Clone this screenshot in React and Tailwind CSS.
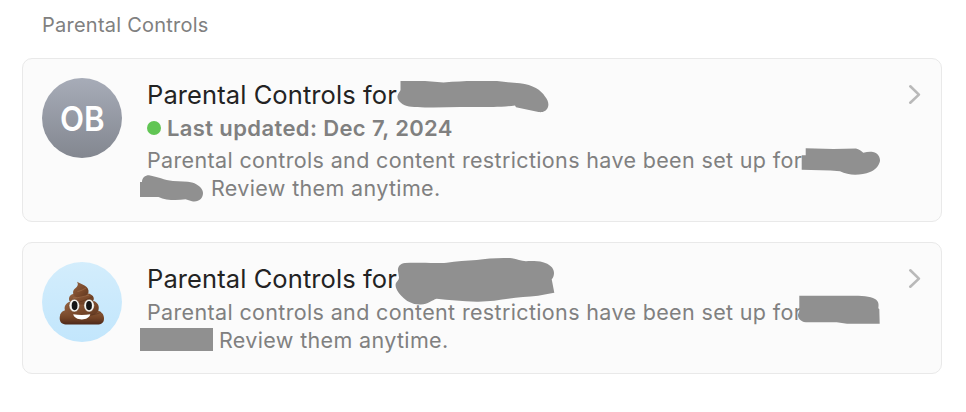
import React from "react";

function Chevron() {
  return (
    <svg className="absolute right-[20px] top-[25px] h-[20px] w-[13px]" viewBox="0 0 13 20" fill="none" stroke="#b9b9b9" strokeWidth="2.6" strokeLinecap="round" strokeLinejoin="round">
      <path d="M2.300 2.300 10.900 10.600 2.300 18.700" />
    </svg>
  );
}

function Poop() {
  return (
    <svg className="h-[44px] w-[46px]" viewBox="0 0 46 44">
      <defs>
        <linearGradient id="base" x1="0" y1="0" x2="0" y2="1">
          <stop offset="0" stopColor="#8a5a3a" />
          <stop offset="0.55" stopColor="#744426" />
          <stop offset="1" stopColor="#4d2819" />
        </linearGradient>
        <linearGradient id="tier" x1="0" y1="0" x2="1" y2="1">
          <stop offset="0" stopColor="#946342" />
          <stop offset="0.6" stopColor="#79482a" />
          <stop offset="1" stopColor="#5c3620" />
        </linearGradient>
      </defs>
      <path d="M7 29C2 30 .7 33.500.7 37.500.7 42 4 43.500 8 43.500H38C42.500 43.500 45 41.500 45 37.500 45 33 42 30 37 29Z" fill="url(#base)" />
      <path d="M10 21C6 23 5 26 6 29.500 7 34 13 35.500 22 35.500S38 34 39.500 29C40.500 25 39 22 35 20Z" fill="url(#tier)" />
      <path d="M14 13C10 14 9 18 11 21 14 25 31 24 34 20 36 17 34 14 30 12.500Z" fill="url(#tier)" />
      <path d="M18 .8C20 4 18 6 15.500 8 13 10.500 14 14.500 17 16 21 18 28 15.500 29.500 11.500 30.500 5 23 4 18 .8Z" fill="url(#tier)" />
      <path d="M11 20.500C17 24 29 18 34 15.500M29 34C35 34 39 33 42 31" fill="none" stroke="#56301c" strokeWidth=".9" opacity=".6" />
      <path d="M18.500 10.500C22 10 25 8 27 7M14 17C20 17 26 15 30 14" fill="none" stroke="#ad7a55" strokeWidth="1" opacity=".5" />
      <ellipse cx="15.300" cy="24.600" rx="5.200" ry="6.300" fill="#f7f5f0" stroke="#5c371f" strokeWidth=".4" />
      <ellipse cx="30.100" cy="24.600" rx="5.200" ry="6.300" fill="#f7f5f0" stroke="#5c371f" strokeWidth=".4" />
      <ellipse cx="15.600" cy="24.600" rx="2.900" ry="4.600" fill="#151515" />
      <ellipse cx="30" cy="24.600" rx="2.900" ry="4.600" fill="#151515" />
      <path d="M14.200 33.300Q22.800 34.800 31.300 33.300C30.500 36.700 27 38.400 22.800 38.400S15 36.700 14.200 33.300Z" fill="#fff" />
    </svg>
  );
}

function Card({ avatar, status, review, viewBox, marks, className }) {
  return (
    <section className={`relative flex rounded-[10px] border border-[#e9e9e9] bg-[#fbfbfb] pl-[19px] pt-[19px] ${className}`}>
      {avatar}
      <div className="ml-[25px] whitespace-nowrap text-[#808080]">
        <h2 className="h-[34px] text-[25.5px] leading-[34px] tracking-[0.09px] text-[#232323]">Parental Controls for</h2>
        {status}
        <p className={`text-[21.5px] leading-[28px] tracking-[0.35px] ${status ? "" : "mt-[2px]"}`}>
          Parental controls and content restrictions have been set up for
          <span className={`block ${review}`}>Review them anytime.</span>
        </p>
      </div>
      <Chevron />
      <svg className="pointer-events-none absolute inset-0 h-full w-full" viewBox={viewBox} fill="#909090">
        {marks.map((d) => <path key={d} d={d} />)}
      </svg>
    </section>
  );
}

const firstMarks = [
  "M400.500 81H425L443.500 82.500C455 81.500 465 81 473.500 81H497C505 82 512 83 520 83.300C533 85 541 90 545 96.500C548 100 549 104 548 107C546 112 542 112.500 538.500 112L516 107.300L515 105.500C507 106.500 500 107 493.500 107H460L433.500 107.500C421 107.500 412 107.300 407 106C400 104 397 99 397.500 96C398 93 400.500 91 400.500 90Z",
  "M805.700 148.300L833.500 149L856 148.500C859 149 861.500 151 863.300 152.700C867 151.700 870 151.500 873 151.900C878 153 880.300 157 880 161C879 166 875 170 870 172C861 175.500 849 176 840 171.300C828 170 814 170 801.700 169.700V155.300H805.700Z",
  "M140 182H142C142 178 145 175.300 149 175.300C158 177 164 180 173 181C180 181.500 187 181 192 182.500C199 184.500 203 189 203 193C203 198 199 202.500 192 201.300L185.500 199.300C177 200.700 166 200.500 158.500 197H140Z",
];

const secondMarks = [
  "M405 263C420 262.500 436 263.500 446.700 262.700C456 261.500 467 260.500 476.700 260C487 258.500 500 257.500 512 258.200C517 259 521 261 526 261.200C532 261 538 261 543 262.300C549 264 554 267.500 554 273C554 276 553 278 551.700 279.300L554.300 292.700C543 295 533 296.700 523 297C507 298.500 492 302 476.700 301.700C462 301 449 300 436.700 298.700C432 300 428 304.300 421 304.500C413 305 406 301 402 296.500C397 292 394.500 286 396 283C397 281 399 280 399 277.500L398 271C397.500 267 400 263.500 405 263Z",
  "M799.300 295.700H850C862 295.700 870 296 875 299C878.500 301 879 304 878.300 308.300L879.300 309L879.700 323.700H847L836.700 322.300H806C800 322 797.500 317 798 314.500L799.300 311Z",
  "M140 328H213V351H140Z",
];

export default function App() {
  return (
    <main className="h-[412px] w-[966px] bg-white px-[22px] pt-[10px] font-[Inter,sans-serif]">
      <h1 className="ml-[20px] h-[48px] text-[20px] leading-[30px] tracking-[0.24px] text-[#808080]">Parental Controls</h1>
      <div className="flex w-[920px] flex-col gap-[20px]">
        <Card
          className="h-[164px]"
          viewBox="23 59 918 162"
          marks={firstMarks}
          review="pl-[64px]"
          avatar={
            <div className="flex h-[80px] w-[80px] items-center justify-center rounded-full bg-linear-to-b from-[#a7acb8] to-[#838790] pt-[1px] text-[34px] font-semibold text-white">
              <span className="scale-x-92">OB</span>
            </div>
          }
          status={
            <div className="flex h-[34px] items-center text-[22px] font-semibold tracking-[0.38px]">
              <span className="mr-[6px] h-[14px] w-[14px] -translate-y-px rounded-full bg-[#61c554]" />
              <span className="-translate-y-px">Last updated: Dec 7, 2024</span>
            </div>
          }
        />
        <Card
          className="h-[132px]"
          viewBox="23 243 918 130"
          marks={secondMarks}
          review="pl-[72px]"
          avatar={<div className="flex h-[80px] w-[80px] items-center justify-center rounded-full bg-linear-to-b from-[#d3edfc] to-[#c2e6fc] pt-[2px]"><Poop /></div>}
        />
      </div>
    </main>
  );
}
